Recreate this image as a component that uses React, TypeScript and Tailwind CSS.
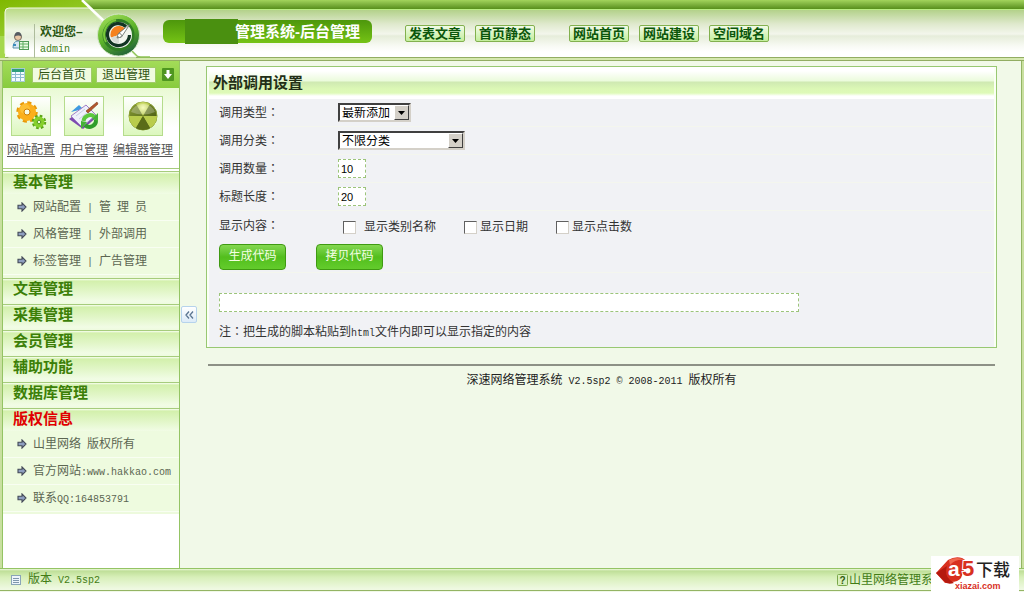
import type { ReactNode } from "react";

const menuSections = [
  {
    title: "基本管理",
    rows: [
      ["网站配置", ["管", "理", "员"]],
      ["风格管理", ["外部调用"]],
      ["标签管理", ["广告管理"]],
    ] as [string, string[]][],
  },
  { title: "文章管理", rows: [] },
  { title: "采集管理", rows: [] },
  { title: "会员管理", rows: [] },
  { title: "辅助功能", rows: [] },
  { title: "数据库管理", rows: [] },
];

function Mono({ children }: { children: ReactNode }) {
  return (
    <span className="whitespace-pre font-['Liberation_Mono',monospace] text-[10px]">{children}</span>
  );
}

// The TC face centres full-width punctuation in its box
function Colon() {
  return <span className="font-['Noto_Sans_CJK_TC',sans-serif]">：</span>;
}

function ArrowIcon() {
  return (
    <svg width="10" height="10" viewBox="0 0 10 10" className="shrink-0">
      <path d="M1 3.2h4V.9L9 5 5 9.1V6.8H1z" fill="#8e9fc0" stroke="#434957" strokeWidth="1.1" />
    </svg>
  );
}

function HeaderArt() {
  return (
    <svg width="150" height="58" viewBox="0 0 150 58" className="absolute left-0 top-0">
      <defs>
        <linearGradient id="leaf" x1="0" y1="0" x2="1" y2="1">
          <stop offset="0" stopColor="#7fb800" />
          <stop offset="1" stopColor="#a5d84c" />
        </linearGradient>
        <linearGradient id="glass" x1="0" y1="0" x2="0" y2="1">
          <stop offset="0" stopColor="#b9da84" />
          <stop offset="0.45" stopColor="#edf5e2" />
          <stop offset="0.6" stopColor="#e6efdc" />
          <stop offset="0.85" stopColor="#ffffff" />
        </linearGradient>
        <linearGradient id="ring" x1="0.2" y1="0" x2="0.7" y2="1">
          <stop offset="0" stopColor="#a2de58" />
          <stop offset="0.5" stopColor="#5cb32a" />
          <stop offset="1" stopColor="#1f5f38" />
        </linearGradient>
      </defs>
      <path d="M0 0h84l36 36H0z" fill="url(#leaf)" />
      <path d="M0 36h5v22H0z" fill="#a5d84c" />
      <path d="M5 12q0-4 4-4h80l47 49H9q-4 0-4-4z" fill="url(#glass)" stroke="#f4fbe8" />
      <path d="M82 0l24 23" stroke="#fff" strokeWidth="2.5" />
      <path d="M131 50l6 6q1 1 4 1h9" fill="none" stroke="#8fc456" strokeWidth="1.5" />
      <circle cx="118.5" cy="35" r="21" fill="url(#ring)" stroke="#d3e6c6" />
      <circle cx="118.5" cy="35" r="16" fill="#2f7d24" />
      <path d="M106 42a15 15 0 0 1 10-22" fill="none" stroke="#79c83a" strokeWidth="2" />
      <circle cx="119" cy="35" r="13" fill="#f2f5ee" />
      <path d="M126 26.5a11 11 0 1 0 3.500 8.500" fill="none" stroke="#123423" strokeWidth="3.2" />
      <path d="M119 35L125 28.500a8.500 8.500 0 0 0-14 9z" fill="#f5821f" />
      <path d="M119 35L111 37.500a8.500 8.500 0 0 0 8 6z" fill="#d8dcd6" />
      <path d="M117 38l2-5 11-9-8.500 13z" fill="#fff" stroke="#5d665f" strokeWidth="0.8" />
      <circle cx="119.5" cy="35.5" r="2" fill="#fff" stroke="#6b746c" strokeWidth="0.8" />
    </svg>
  );
}

function UserIcon() {
  return (
    <svg width="18" height="20" viewBox="0 0 18 20">
      <circle cx="6" cy="6" r="3.5" fill="#e9c7a6" stroke="#766b61" />
      <path d="M2.5 5.5q0-4.5 3.5-4.5t3.500 4.500q-3-2-7 0z" fill="#555b62" />
      <path d="M1 17q0-7 5-7t5 7z" fill="#d7e7f2" stroke="#5c93ad" />
      <path d="M1 14h3" stroke="#3b8dbb" strokeWidth="2" />
      <rect x="7.5" y="10.5" width="9" height="8" fill="#e9fbe2" stroke="#4f9a55" />
      <path d="M8 13h8M8 16h8M11 11v7" stroke="#5eae62" />
    </svg>
  );
}

function GridIcon() {
  return (
    <svg width="14" height="14" viewBox="0 0 14 14" className="shrink-0">
      <rect x="0.5" y="0.5" width="13" height="13" fill="#f3fbff" stroke="#a5cbd2" />
      <path d="M1 1h12v3H1z" fill="#2f9f7b" />
      <path d="M1 6.5h12M1 9.5h12M4.500 4v9M9.500 4v9" stroke="#8cbad0" />
    </svg>
  );
}

function GearsIcon() {
  return (
    <svg width="34" height="34" viewBox="0 0 34 34">
      <circle cx="13" cy="13" r="8.5" fill="none" stroke="#e89a08" strokeWidth="4.5" strokeDasharray="3.7 2.975" />
      <circle cx="13" cy="13" r="6" fill="none" stroke="#fbb01c" strokeWidth="6" />
      <circle cx="11" cy="10" r="5" fill="#ffd04e" opacity="0.5" />
      <circle cx="13" cy="13" r="3" fill="#f6fde9" stroke="#cf7f00" />
      <circle cx="25" cy="23" r="5.5" fill="none" stroke="#5aa516" strokeWidth="3.5" strokeDasharray="2.4 1.920" />
      <circle cx="25" cy="23" r="3.7" fill="none" stroke="#86d02c" strokeWidth="3.6" />
      <circle cx="25" cy="23" r="1.8" fill="#f0fbd8" stroke="#4b9410" />
    </svg>
  );
}

function NotebookIcon() {
  return (
    <svg width="34" height="34" viewBox="0 0 34 34">
      <path d="M4 13l8-7 4 4z" fill="#3e9ae0" />
      <path d="M2 20L19 8l11 10-14 12z" fill="#7d4bb0" />
      <path d="M4 17L19 6l10 10-14 12z" fill="#eef0fb" stroke="#a07cc8" />
      <path d="M9 17l9-7M12 20l9-7" stroke="#c8cfe4" />
      <path d="M19 12L30 3l1 2-10 9z" fill="#b4562b" stroke="#7a3a1d" strokeWidth="0.6" />
      <path d="M16.500 22a6.500 6.500 0 0 1 11-4" fill="none" stroke="#5cc83e" strokeWidth="4" />
      <path d="M29 21a6.500 6.500 0 0 1-11 5" fill="none" stroke="#2f9e2b" strokeWidth="4" />
      <path d="M25 20l6-6 0 8zM20 23l-6 7 0-8z" fill="#44b336" />
    </svg>
  );
}

function RadiationIcon() {
  return (
    <svg width="34" height="34" viewBox="0 0 34 34">
      <defs>
        <radialGradient id="ball" cx="0.5" cy="0.4" r="0.6">
          <stop offset="0" stopColor="#f3fba4" />
          <stop offset="1" stopColor="#a8bd38" />
        </radialGradient>
        <linearGradient id="blade" x1="0" y1="0" x2="1" y2="1">
          <stop offset="0" stopColor="#8a9d35" />
          <stop offset="1" stopColor="#3c4f0c" />
        </linearGradient>
      </defs>
      <circle cx="17" cy="17" r="14" fill="url(#blade)" stroke="#879c32" />
      <path d="M17 17L10 5a14 14 0 0 1 14 0z" fill="url(#ball)" />
      <path d="M17 17L3 17a14 14 0 0 0 7 12z" fill="#b9cc4c" />
      <path d="M17 17L31 17a14 14 0 0 1-7 12z" fill="#b9cc4c" />
      <path d="M17 17L10 29a14 14 0 0 0 14 0z" fill="#5a6c18" />
      <path d="M5 13a13 13 0 0 1 24 0q-12 5-24 0z" fill="#fff" opacity="0.25" />
    </svg>
  );
}

function NavButton({ children }: { children: ReactNode }) {
  return (
    <button
      type="button"
      className="flex h-[17px] w-[60px] items-center justify-center whitespace-nowrap rounded-xs border border-[#82b04e] bg-linear-to-b from-[#f1fbe6] to-[#c3ee9b] text-[13px] font-bold leading-none text-[#0b560b]"
    >
      {children}
    </button>
  );
}

function Header() {
  return (
    <header className="relative flex h-[61px] shrink-0 flex-col">
      <div className="h-[9px] bg-linear-to-b from-[#a3d45c] to-[#588f1b]" />
      <div className="h-px bg-[#b9ee83]" />
      <div className="h-[47px] bg-[linear-gradient(#b3d18a_0,#dfe9cd_14px,#f3f6ec_24px,#e6edda_26px,#f8faf4_36px,#fff_42px)]" />
      <div className="h-1 border-y border-[#92ad62] bg-[#d5e8ae]" />
      <HeaderArt />
      <div className="absolute inset-x-0 top-0 flex h-[57px] items-start">
        <div className="flex w-[163px] items-center gap-1 pl-3 pt-6">
          <UserIcon />
          <div className="border-l border-[#aebc9c] pl-[5px] text-xs leading-4 text-[#3d7d12]">
            <p className="font-bold text-[#2a5713]">欢迎您–</p>
            <p>
              <Mono>admin</Mono>
            </p>
          </div>
        </div>
        <h1 className="mt-5 flex h-[23px] w-[209px] items-center rounded-md bg-linear-to-b from-[#4d970c] to-[#75c315] text-[15px] font-bold leading-none text-white">
          <span className="ml-[22px] mr-[-3px] h-[25px] w-[53px] bg-[#4a9010]" />
          <span className="whitespace-nowrap">管理系统-后台管理</span>
        </h1>
        <nav className="flex pl-[33px] pt-[25px]">
          <div className="flex gap-2.5">
            <NavButton>发表文章</NavButton>
            <NavButton>首页静态</NavButton>
          </div>
          <div className="ml-[34px] flex gap-2.5">
            <NavButton>网站首页</NavButton>
            <NavButton>网站建设</NavButton>
            <NavButton>空间域名</NavButton>
          </div>
        </nav>
      </div>
    </header>
  );
}

function Shortcut({ label, children }: { label: string; children: ReactNode }) {
  return (
    <a href="#" className="flex flex-col items-center gap-1.5">
      <span className="flex size-10 items-center justify-center border border-[#b5dc8c] bg-linear-to-b from-white to-[#dcf7bd]">
        {children}
      </span>
      <span className="whitespace-nowrap text-xs leading-4 text-[#555] underline underline-offset-2">{label}</span>
    </a>
  );
}

function SectionTitle({ children, active = false }: { children: ReactNode; active?: boolean }) {
  return (
    <h2
      className={
        active
          ? "h-[22px] pl-2.5 text-[15px] font-bold leading-5 text-[#e00000]"
          : "h-[22px] pl-2.5 text-[15px] font-bold leading-5 text-[#3c7f08]"
      }
    >
      {children}
    </h2>
  );
}

function MenuRow({ children }: { children: ReactNode }) {
  return (
    <li className="flex h-[27px] items-center gap-1.5 whitespace-nowrap border-b border-[#f8fef2] pl-3.5 text-xs text-[#5c6652]">
      <ArrowIcon />
      <span>{children}</span>
    </li>
  );
}

const sectionClass =
  "border-t border-[#a6cc7c] bg-[linear-gradient(#fafff4_0,#d3f0ac_2px,#e1f6c7_12px,#f1fce5_22px,#edfadd_26px)]";

function Sidebar() {
  return (
    <aside className="flex w-[178px] shrink-0 flex-col border-x border-[#94c464] bg-white">
      <div className="flex h-[27px] items-center bg-linear-to-b from-[#a3dc58] to-[#88cb3e] pl-2">
        <GridIcon />
        <button
          type="button"
          className="ml-[7px] h-4 w-[60px] border border-[#a0cb68] bg-[#f0fbe0] text-xs leading-none text-[#2f5410]"
        >
          后台首页
        </button>
        <button
          type="button"
          className="ml-1 h-4 w-[60px] border border-[#a0cb68] bg-[#f0fbe0] text-xs leading-none text-[#2f5410]"
        >
          退出管理
        </button>
        <svg width="12" height="13" viewBox="0 0 12 13" className="ml-1.5">
          <rect width="12" height="13" rx="1" fill="#4f9620" />
          <path d="M4.5 2h3v4H10l-4 5-4-5h2.500z" fill="#fff" />
        </svg>
      </div>
      <div className="flex gap-[5px] border-b border-[#a6cc7c] bg-linear-to-b from-[#e9fad3] via-white to-white pb-2.5 pl-1 pt-2">
        <Shortcut label="网站配置">
          <GearsIcon />
        </Shortcut>
        <Shortcut label="用户管理">
          <NotebookIcon />
        </Shortcut>
        <Shortcut label="编辑器管理">
          <RadiationIcon />
        </Shortcut>
      </div>
      <div className="pt-0.5">
        {menuSections.map((section) => (
          <section key={section.title} className={`${sectionClass} pb-[3px]`}>
            <SectionTitle>{section.title}</SectionTitle>
            {section.rows.length > 0 && (
              <ul className="bg-[#eefbdf]">
                {section.rows.map(([left, right]) => (
                  <MenuRow key={left}>
                    <a href="#">{left}</a>
                    <Mono> | </Mono>
                    <a href="#">
                      {right.map((word, i) => (
                        <span key={word}>
                          {i > 0 && <Mono> </Mono>}
                          {word}
                        </span>
                      ))}
                    </a>
                  </MenuRow>
                ))}
              </ul>
            )}
          </section>
        ))}
        <section className={`${sectionClass} pb-0.5`}>
          <SectionTitle active>版权信息</SectionTitle>
          <ul className="bg-[#eefbdf]">
            <MenuRow>
              山里网络<Mono> </Mono>版权所有
            </MenuRow>
            <MenuRow>
              官方网站<Mono>:www.hakkao.com</Mono>
            </MenuRow>
            <MenuRow>
              联系<Mono>QQ:164853791</Mono>
            </MenuRow>
          </ul>
        </section>
      </div>
    </aside>
  );
}

function FormRow({ label, htmlFor, children }: { label: string; htmlFor?: string; children: ReactNode }) {
  return (
    <div className="flex h-7 items-center border-b border-[#f4f6ee]">
      <label htmlFor={htmlFor} className="w-[119px]">
        {label}
        <Colon />
      </label>
      {children}
    </div>
  );
}

function SelectBox({ id, option, className }: { id: string; option: string; className: string }) {
  return (
    <span className="relative flex">
      <select
        id={id}
        className={`${className} h-[19px] appearance-none border-2 border-b-[#d4d0c8] border-l-[#404040] border-r-[#d4d0c8] border-t-[#404040] bg-white pl-0.5 text-xs leading-none text-black`}
      >
        <option>{option}</option>
      </select>
      <span className="pointer-events-none absolute bottom-0.5 right-0.5 top-0.5 flex w-[15px] items-center justify-center border border-b-[#404040] border-l-white border-r-[#404040] border-t-white bg-[#d4d0c8]">
        <svg width="7" height="4" viewBox="0 0 7 4">
          <path d="M0 0h7L3.5 4z" fill="#000" />
        </svg>
      </span>
    </span>
  );
}

const inputClass =
  "h-[19px] border border-dashed border-[#9cc47a] bg-white px-0.5 text-black outline-none";

const checkboxClass =
  "size-[13px] appearance-none border border-b-[#d4d0c8] border-l-[#606060] border-r-[#d4d0c8] border-t-[#606060] bg-white checked:bg-[#5cae2a]";

const submitClass =
  "h-[26px] w-[67px] rounded border border-[#3f9a12] bg-linear-to-b from-[#84d850] via-[#52be1c] to-[#63cc2c] pb-0.5 text-xs leading-none text-[#f4ffe4]";

function CallSettings() {
  return (
    <form
      onSubmit={(event) => event.preventDefault()}
      className="border border-[#98c872] bg-[#fafff4] px-0.5 text-xs text-[#333]"
    >
      <h2 className="h-8 bg-[linear-gradient(#fff_0,#fff_4px,#ebfbdc_14px,#cfe9b2_15px,#dcf8b6_22px,#defab8_26px,#fff_29px)] pl-1 text-[15px] font-bold leading-8 text-[#222e16]">
        外部调用设置
      </h2>
      <div className="bg-[#f1f2f5] pl-2.5">
        <FormRow label="调用类型" htmlFor="call-type">
          <SelectBox id="call-type" option="最新添加" className="w-[73px]" />
        </FormRow>
        <FormRow label="调用分类" htmlFor="call-category">
          <SelectBox id="call-category" option="不限分类" className="w-[127px]" />
        </FormRow>
        <FormRow label="调用数量" htmlFor="call-count">
          <input
            id="call-count"
            defaultValue="10"
            className={`${inputClass} w-7 font-['Liberation_Sans',sans-serif] text-[11px]`}
          />
        </FormRow>
        <FormRow label="标题长度" htmlFor="title-length">
          <input
            id="title-length"
            defaultValue="20"
            className={`${inputClass} w-7 font-['Liberation_Sans',sans-serif] text-[11px]`}
          />
        </FormRow>
        <div className="flex h-7 items-center">
          <span className="w-[119px]">
            显示内容
            <Colon />
          </span>
          <div className="flex gap-7 pl-[5px] pt-1">
            <label className="flex items-center gap-2">
              <input type="checkbox" className={checkboxClass} />
              显示类别名称
            </label>
            <label className="flex items-center gap-[3px]">
              <input type="checkbox" className={checkboxClass} />
              显示日期
            </label>
            <label className="flex items-center gap-[3px]">
              <input type="checkbox" className={checkboxClass} />
              显示点击数
            </label>
          </div>
        </div>
        <div className="flex h-[34px] items-center gap-[30px] border-b border-[#f4f6ee] pt-0.5">
          <button type="submit" className={submitClass}>
            生成代码
          </button>
          <button type="button" className={submitClass}>
            拷贝代码
          </button>
        </div>
        <div className="pt-5">
          <input aria-label="代码" className={`${inputClass} block w-[580px] max-w-full`} />
        </div>
        <p className="pb-1 pt-2.5 leading-[18px]">
          注
          <Colon />
          把生成的脚本粘贴到<Mono>html</Mono>文件内即可以显示指定的内容
        </p>
      </div>
    </form>
  );
}

function Watermark() {
  return (
    <div className="absolute bottom-0 right-[5px] flex h-9 w-[88px] bg-white">
      <svg width="88" height="36" viewBox="0 0 88 36">
        <path d="M5 17L17 4Q24 0 31 2q5 2 4 7l-5 13q-3 4-10 4-4 1-6 1z" fill="#d8301f" />
        <path d="M5 17l11-7q-3 9 3 14l4 3q-7 2-10-2z" fill="#b5190f" />
        <path d="M18 4q8-4 16 0-10-1-15 5z" fill="#f0674f" />
        <text x="17" y="20" fontFamily="Liberation Sans, sans-serif" fontSize="21" fontWeight="700" fill="#fff">
          a
        </text>
        <text
          x="31"
          y="20"
          fontFamily="Liberation Sans, sans-serif"
          fontSize="22"
          fontWeight="700"
          fill="#d8301f"
          stroke="#fff"
          strokeWidth="2"
          paintOrder="stroke"
        >
          5
        </text>
        <text x="45" y="20" fontFamily="Noto Sans CJK SC, sans-serif" fontSize="17" fontWeight="500" fill="#222">
          下载
        </text>
        <text x="24" y="33" fontFamily="Liberation Sans, sans-serif" fontSize="9" fontWeight="700" fill="#d8301f">
          xiazai.com
        </text>
      </svg>
    </div>
  );
}

function StatusBar() {
  return (
    <footer className="relative h-6 shrink-0 border-t border-[#94c464]">
      <div className="flex h-[22px] items-center border-b border-[#94b464] bg-[linear-gradient(#eefadc_0,#bfdf98_2px,#d7efb8_8px,#eff9e2_20px)] pl-[11px] pr-[91px] text-xs text-[#427c16]">
        <svg width="10" height="10" viewBox="0 0 10 10">
          <rect x="0.5" y="0.5" width="9" height="9" fill="#eef5fb" stroke="#8aa5b8" />
          <path d="M2 3.5h6M2 5.5h6M2 7.5h6" stroke="#7f97ad" />
        </svg>
        <span className="ml-[7px]">
          版本<Mono> V2.5sp2</Mono>
        </span>
        <span className="ml-auto flex items-center gap-px">
          <svg width="11" height="12" viewBox="0 0 11 12">
            <rect x="0.5" y="0.5" width="10" height="11" rx="1" fill="#d9f0bd" stroke="#7aa84a" />
            <text
              x="5.5"
              y="9.5"
              textAnchor="middle"
              fontFamily="Liberation Sans, sans-serif"
              fontSize="10"
              fontWeight="700"
              fill="#2f5a10"
            >
              ?
            </text>
          </svg>
          山里网络管理系
        </span>
      </div>
      <Watermark />
    </footer>
  );
}

export default function App() {
  return (
    <div className="flex min-h-screen flex-col bg-[#f1f9e8] font-['Liberation_Sans','Noto_Sans_CJK_SC',sans-serif]">
      <Header />
      <div className="flex flex-1 border-x-2 border-[#c9e0a0]">
        <Sidebar />
        <div className="flex w-[26px] shrink-0 items-center pl-px">
          <button
            type="button"
            aria-label="收起菜单"
            className="flex h-[17px] w-4 items-center justify-center rounded-xs border border-[#b6d3ec] bg-linear-to-b from-white to-[#dcebf8]"
          >
            <svg width="9" height="8" viewBox="0 0 9 8">
              <path d="M4 0.5L1 4l3 3.500M8 0.500L5 4l3 3.500" fill="none" stroke="#5b7590" strokeWidth="1.3" />
            </svg>
          </button>
        </div>
        <main className="flex-1 border-r border-[#94b464] pr-6 pt-[5px]">
          <CallSettings />
          <div className="mx-0.5 mt-4 border-t-2 border-t-[#8d9186]" />
          <p className="pt-[5px] text-center text-xs leading-[18px] text-[#222]">
            深速网络管理系统<Mono> V2.5sp2 © 2008-2011 </Mono>版权所有
          </p>
        </main>
      </div>
      <StatusBar />
    </div>
  );
}
